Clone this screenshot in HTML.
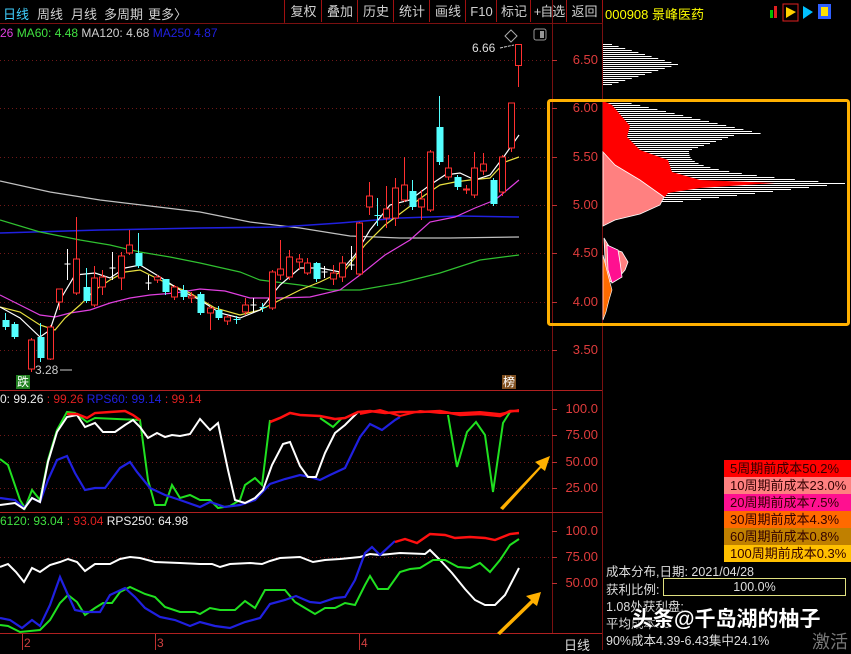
<!DOCTYPE html>
<html><head><meta charset="utf-8">
<style>
html,body{margin:0;padding:0;background:#000;width:851px;height:650px;overflow:hidden;font-family:"Liberation Sans","Noto Sans CJK SC",sans-serif;}
.abs{position:absolute;white-space:nowrap;}
.tb{position:absolute;top:0;height:22px;line-height:24px;font-size:13px;color:#d0d0d0;text-align:center;border-left:1px solid #a01010;white-space:nowrap;overflow:hidden;}
.lg{position:absolute;left:724px;width:127px;height:17px;line-height:17px;font-size:13px;color:#300;padding-left:6px;box-sizing:border-box;}
.ax{position:absolute;left:560px;width:38px;text-align:right;font-size:13px;color:#e03c3c;}
.tl{position:absolute;top:4px;font-size:13px;color:#d0d0d0;white-space:nowrap;}
</style></head><body>
<svg id="s" width="851" height="650" style="position:absolute;left:0;top:0" xmlns="http://www.w3.org/2000/svg">
<rect width="851" height="650" fill="#000"/>
<g stroke="#7a1010" stroke-width="1">
<line x1="0" y1="23.5" x2="602" y2="23.5"/>
<line x1="552.5" y1="0" x2="552.5" y2="634"/>
<line x1="602.5" y1="0" x2="602.5" y2="650"/>
<line x1="0" y1="390.5" x2="602" y2="390.5" stroke="#b02020"/>
<line x1="0" y1="512.5" x2="602" y2="512.5" stroke="#b02020"/>
<line x1="0" y1="633.5" x2="602" y2="633.5" stroke="#b02020"/>
<line x1="284.5" y1="0" x2="284.5" y2="23"/>
</g>
<g stroke="#701818" stroke-width="1" stroke-dasharray="1,3">
<line x1="0" y1="60.5" x2="552" y2="60.5"/><line x1="0" y1="108.5" x2="552" y2="108.5"/>
<line x1="0" y1="157.5" x2="552" y2="157.5"/><line x1="0" y1="205.5" x2="552" y2="205.5"/>
<line x1="0" y1="253.5" x2="552" y2="253.5"/><line x1="0" y1="302.5" x2="552" y2="302.5"/>
<line x1="0" y1="350.5" x2="552" y2="350.5"/>
<line x1="0" y1="435.5" x2="552" y2="435.5"/><line x1="0" y1="462.5" x2="552" y2="462.5"/>
<line x1="0" y1="488.5" x2="552" y2="488.5"/><line x1="0" y1="557.5" x2="552" y2="557.5"/>
</g>
<g stroke="#c03030" stroke-width="1">
<line x1="552" y1="60.5" x2="557" y2="60.5"/><line x1="552" y1="108.5" x2="557" y2="108.5"/><line x1="552" y1="157.5" x2="557" y2="157.5"/><line x1="552" y1="205.5" x2="557" y2="205.5"/><line x1="552" y1="253.5" x2="557" y2="253.5"/><line x1="552" y1="302.5" x2="557" y2="302.5"/><line x1="552" y1="350.5" x2="557" y2="350.5"/>
<line x1="552" y1="409.5" x2="557" y2="409.5"/><line x1="552" y1="435.5" x2="557" y2="435.5"/><line x1="552" y1="462.5" x2="557" y2="462.5"/><line x1="552" y1="488.5" x2="557" y2="488.5"/>
<line x1="552" y1="531.5" x2="557" y2="531.5"/><line x1="552" y1="557.5" x2="557" y2="557.5"/><line x1="552" y1="583.5" x2="557" y2="583.5"/>
<line x1="22.5" y1="634" x2="22.5" y2="650"/><line x1="155.5" y1="634" x2="155.5" y2="650"/><line x1="359.5" y1="634" x2="359.5" y2="650"/>
</g>
<g id="ma" fill="none" stroke-width="1.2"></g>
<g id="cd"></g>
<g id="rps" fill="none" stroke-width="2.2"></g>
<g id="chip"></g>
<rect x="548.5" y="100.5" width="300" height="224" fill="none" stroke="#ffb000" stroke-width="3" rx="2"/>
<g fill="#ffb000">
<polygon points="500,508 540,466 535,462 550,456 545,471 541,468 503,510"/>
<polygon points="497,633 531,600 526,596 541,592 537,606 533,603 500,635"/>
</g>
<path d="M505 36 l6 -6 l6 6 l-6 6z" fill="none" stroke="#aaa"/>
<rect x="534" y="29" width="12" height="11" rx="2" fill="none" stroke="#999"/><rect x="540" y="31" width="4" height="7" fill="#999"/>
<line x1="500" y1="48" x2="514" y2="45" stroke="#ccc" stroke-dasharray="3,1"/>
<line x1="60" y1="370" x2="72" y2="370" stroke="#ccc"/>
<rect x="770" y="10" width="3" height="8" fill="#00c000"/><rect x="774" y="6" width="3" height="12" fill="#e02020"/>
<rect x="783" y="4" width="15" height="17" fill="none" stroke="#e02020"/><polygon points="786,7 796,12 786,18" fill="#ffd000"/>
<polygon points="803,6 813,12 803,19" fill="#00c0ff"/>
<rect x="818" y="4" width="13" height="15" fill="#3060ff"/><rect x="821" y="7" width="7" height="9" fill="#ffe000"/>
</svg>

<div class="tl" style="left:3px;color:#40d0ff">日线</div>
<div class="tl" style="left:37px">周线</div>
<div class="tl" style="left:71px">月线</div>
<div class="tl" style="left:104px">多周期</div>
<div class="tl" style="left:148px">更多〉</div>
<div class="tb" style="left:284px;width:37px">复权</div>
<div class="tb" style="left:321px;width:36px">叠加</div>
<div class="tb" style="left:357px;width:36px">历史</div>
<div class="tb" style="left:393px;width:36px">统计</div>
<div class="tb" style="left:429px;width:36px">画线</div>
<div class="tb" style="left:465px;width:31px">F10</div>
<div class="tb" style="left:496px;width:34px">标记</div>
<div class="tb" style="left:530px;width:36px;letter-spacing:-1px">+自选</div>
<div class="tb" style="left:566px;width:35px;border-right:1px solid #a01010">返回</div>
<div class="abs" style="left:605px;top:4px;font-size:13px;color:#ffff00">000908 景峰医药</div>

<div class="abs" style="left:0;top:26px;font-size:12px"><span style="color:#e040e0">26 </span><span style="color:#40e040">MA60: 4.48 </span><span style="color:#d0d0d0">MA120: 4.68 </span><span style="color:#2020e0">MA250 4.87</span></div>
<div class="abs" style="left:472px;top:41px;font-size:12px;color:#ddd">6.66</div>
<div class="abs" style="left:35px;top:363px;font-size:12px;color:#ccc">3.28</div>
<div class="abs" style="left:16px;top:375px;font-size:12px;color:#fff;background:#208020;padding:0 1px;line-height:14px">跌</div>
<div class="abs" style="left:502px;top:375px;font-size:12px;color:#fff;background:#805020;padding:0 1px;line-height:14px">榜</div>

<div class="ax" style="top:52px">6.50</div><div class="ax" style="top:100px">6.00</div><div class="ax" style="top:149px">5.50</div><div class="ax" style="top:197px">5.00</div><div class="ax" style="top:245px">4.50</div><div class="ax" style="top:294px">4.00</div><div class="ax" style="top:342px">3.50</div>
<div class="ax" style="top:401px">100.0</div><div class="ax" style="top:427px">75.00</div><div class="ax" style="top:454px">50.00</div><div class="ax" style="top:480px">25.00</div>
<div class="ax" style="top:523px">100.0</div><div class="ax" style="top:549px">75.00</div><div class="ax" style="top:575px">50.00</div>

<div class="abs" style="left:0;top:392px;font-size:12px"><span style="color:#eee">0: 99.26 </span><span style="color:#e02020">: 99.26 </span><span style="color:#2020e0">RPS60: 99.14 </span><span style="color:#e02020">: 99.14</span></div>
<div class="abs" style="left:0;top:514px;font-size:12px"><span style="color:#40e040">6120: 93.04 </span><span style="color:#e02020">: 93.04 </span><span style="color:#eee">RPS250: 64.98</span></div>
<div class="abs" style="left:24px;top:636px;font-size:12px;color:#d04040">2</div>
<div class="abs" style="left:157px;top:636px;font-size:12px;color:#d04040">3</div>
<div class="abs" style="left:361px;top:636px;font-size:12px;color:#d04040">4</div>
<div class="abs" style="left:564px;top:635px;font-size:13px;color:#ddd">日线</div>

<div class="lg" style="top:460px;background:#ff0000">5周期前成本50.2%</div>
<div class="lg" style="top:477px;background:#ff8080">10周期前成本23.0%</div>
<div class="lg" style="top:494px;background:#ff1090">20周期前成本7.5%</div>
<div class="lg" style="top:511px;background:#ff6a00">30周期前成本4.3%</div>
<div class="lg" style="top:528px;background:#c08000">60周期前成本0.8%</div>
<div class="lg" style="top:545px;background:#ffc000">100周期前成本0.3%</div>
<div class="abs" style="left:606px;top:561px;font-size:12.5px;color:#ddd">成本分布,日期: 2021/04/28</div>
<div class="abs" style="left:606px;top:579px;font-size:12.5px;color:#ddd">获利比例:</div>
<div class="abs" style="left:663px;top:578px;width:181px;height:16px;border:1px solid #e0e080;font-size:12.5px;color:#ddd;text-align:center;line-height:16px">100.0%</div>
<div class="abs" style="left:606px;top:596px;font-size:12.5px;color:#ddd">1.08处获利盘:</div>
<div class="abs" style="left:606px;top:613px;font-size:12.5px;color:#ddd">平均成本: 3</div>
<div class="abs" style="left:606px;top:630px;font-size:12.5px;color:#ddd">90%成本4.39-6.43集中24.1%</div>
<div class="abs" style="left:632px;top:603px;font-size:21px;font-weight:bold;color:#fff;text-shadow:1px 1px 2px #000,-1px -1px 2px #000">头条@千岛湖的柚子</div>
<div class="abs" style="left:812px;top:628px;font-size:18px;color:#777">激活</div>

<script>
var NS="http://www.w3.org/2000/svg";
function el(p,t,a){var e=document.createElementNS(NS,t);for(var k in a)e.setAttribute(k,a[k]);document.getElementById(p).appendChild(e);return e;}
function pl(p,col,pts,w){el(p,"polyline",{points:pts.map(function(q){return q.join(",")}).join(" "),stroke:col,"stroke-width":w||1.2,fill:"none"});}
var C=[[5,320,327,313,330,'c'],[14,324,337,322,339,'c'],[30,340,369,338,372,'r'],[39,337,358,323,362,'c'],[48,327,359,325,360,'r'],[57,289,302,289,310,'r'],[65,264,265,249,280,'w'],[74,259,293,217,295,'r'],[83,287,301,268,303,'c'],[91,278,305,266,307,'r'],[99,277,287,270,295,'r'],[108,268,269,252,280,'w'],[117,256,278,252,290,'r'],[125,245,253,230,255,'r'],[134,253,266,233,268,'c'],[143,283,284,275,290,'w'],[152,277,280,275,283,'r'],[160,279,292,279,295,'c'],[168,287,297,285,300,'r'],[177,290,297,285,300,'c'],[185,296,298,292,303,'r'],[194,294,313,292,315,'c'],[203,308,313,306,330,'r'],[211,310,318,306,320,'c'],[220,317,321,315,325,'r'],[228,319,320,316,324,'c'],[237,305,312,298,315,'r'],[245,305,306,298,312,'w'],[254,307,308,303,312,'c'],[263,272,308,270,310,'r'],[271,269,275,240,280,'r'],[280,257,277,250,280,'r'],[289,259,262,254,270,'r'],[297,263,273,258,275,'r'],[306,263,279,262,282,'c'],[314,272,273,266,278,'w'],[322,273,279,265,285,'r'],[331,263,277,256,282,'r'],[340,265,266,246,270,'w'],[348,223,274,222,276,'r'],[357,196,207,182,215,'r'],[365,215,216,198,226,'c'],[374,209,218,186,228,'r'],[382,188,218,178,226,'r'],[391,185,200,157,202,'r'],[399,191,207,180,210,'c'],[408,199,207,190,220,'r'],[416,152,210,150,212,'r'],[425,127,162,96,165,'c'],[434,168,177,155,180,'r'],[442,177,187,175,190,'c'],[451,189,190,185,194,'r'],[459,168,195,152,198,'r'],[468,164,171,153,175,'r'],[477,180,204,178,206,'c'],[486,157,192,155,196,'r'],[495,103,148,103,152,'r']];
C.forEach(function(c){var x=Math.round(c[0]*1.033)+0.5,tp=c[5];
 var col=tp=='r'?'#ff3030':(tp=='c'?'#54ffff':'#ffffff');
 el('cd','line',{x1:x,y1:c[3],x2:x,y2:c[4],stroke:col});
 if(tp=='w'){el('cd','line',{x1:x-3,y1:c[1],x2:x+3,y2:c[1],stroke:col});}
 else if(tp=='c'){el('cd','rect',{x:x-3,y:c[1],width:7,height:Math.max(1,c[2]-c[1]),fill:col});}
 else {el('cd','rect',{x:x-3,y:c[1],width:6,height:Math.max(1,c[2]-c[1]),fill:'#000',stroke:col});}
});
el('cd','line',{x1:518.5,y1:66,x2:518.5,y2:87,stroke:'#ff3030'});
el('cd','rect',{x:515.5,y:44.5,width:6,height:21,fill:'#000',stroke:'#ff3030'});
pl('ma','#c0c0c0',[[0,181],[50,192],[100,200],[150,206],[200,212],[250,222],[300,228],[350,236],[400,238],[450,238],[519,237]]);
pl('ma','#2020e0',[[0,233],[100,230],[200,228],[280,227],[340,223],[400,218],[460,216],[519,217]],1.5);
pl('ma','#30c030',[[0,220],[40,232],[80,240],[110,245],[140,252],[170,257],[200,263],[240,272],[260,280],[300,285],[330,290],[360,290],[400,283],[440,273],[480,260],[519,255]]);
pl('ma','#e040e0',[[0,295],[20,305],[40,315],[55,317],[70,313],[90,310],[110,303],[130,298],[150,295],[175,293],[200,289],[225,291],[250,298],[280,298],[310,297],[340,290],[360,275],[385,255],[410,240],[430,222],[455,217],[475,208],[495,200],[519,180]]);
pl('ma','#e8e040',[[0,307],[20,312],[40,325],[55,330],[65,318],[80,305],[95,290],[110,280],[125,272],[140,270],[160,280],[190,293],[215,308],[240,315],[260,310],[280,300],[300,290],[320,282],[345,270],[365,245],[385,225],[405,210],[425,195],[440,185],[455,182],[470,180],[490,178],[505,162],[519,157]]);
pl('ma','#ffffff',[[0,307],[20,318],[40,337],[50,330],[60,300],[75,275],[95,273],[110,278],[125,268],[140,265],[160,277],[180,290],[200,300],[220,313],[240,318],[260,310],[280,285],[300,268],[320,268],[340,272],[355,255],[370,230],[390,205],[410,200],[430,185],[445,175],[460,173],[475,180],[490,175],[505,155],[519,135]]);
pl('rps','#20e020',[[0,459],[8,465],[20,500],[25,508],[32,490],[40,500],[48,460],[57,430],[67,412],[75,413],[87,422],[95,418],[140,420],[148,480],[155,505],[165,505],[172,485],[180,498],[190,495],[200,500],[210,500],[218,508],[230,506],[240,500],[245,485],[255,478],[262,485],[270,420]],2);
pl('rps','#20e020',[[320,418],[333,427],[342,418]],2);
pl('rps','#20e020',[[448,415],[457,467],[467,432],[476,422],[485,435],[493,492],[503,423],[510,412]],2);
pl('rps','#2020e0',[[0,498],[15,500],[24,508],[32,498],[40,502],[48,480],[57,460],[67,456],[75,473],[85,490],[95,488],[105,488],[120,468],[130,462],[137,472],[150,488],[165,495],[180,500],[200,507],[210,502],[225,507],[240,505],[255,500],[270,484],[285,479],[300,475],[310,477],[320,480],[330,475],[345,468],[360,437],[370,424],[382,430],[395,420],[400,417]],2.2);
pl('rps','#ffffff',[[0,505],[15,503],[24,509],[32,498],[40,502],[48,462],[57,432],[67,417],[77,415],[85,427],[95,423],[103,432],[115,432],[125,425],[133,420],[140,427],[148,438],[157,433],[165,437],[172,435],[180,436],[190,434],[200,419],[210,430],[218,423],[228,470],[235,500],[245,503],[255,498],[263,490],[272,465],[283,444],[290,442],[300,466],[308,477],[316,477],[325,453],[335,433],[345,425],[358,412]],2);
pl('rps','#ff1010',[[67,414],[77,414],[87,418],[95,413],[110,412],[125,411],[133,415],[140,420]],2.4);
pl('rps','#ff1010',[[270,422],[280,418],[290,413],[300,415],[320,416],[335,419],[345,418],[358,412],[370,411],[385,413],[400,412],[420,412],[440,411],[460,415],[480,414],[500,416],[510,411],[519,411]],2.6);
pl('rps','#ff1010',[[360,414],[380,410],[400,416],[420,411],[440,413],[460,413],[480,412],[500,414],[519,410]],2);
pl('rps','#ffffff',[[0,567],[8,564],[16,572],[24,582],[32,568],[40,572],[50,565],[60,562],[68,559],[77,562],[85,571],[95,564],[110,564],[120,559],[130,557],[140,558],[155,562],[180,563],[200,564],[212,564],[220,567],[230,564],[250,563],[262,564],[270,561],[280,558],[300,557],[313,562],[325,560],[340,559],[360,557],[370,554],[380,555],[400,553],[425,554],[430,550],[440,560],[452,573],[465,589],[475,600],[485,605],[495,605],[505,595],[519,568]],2);
pl('rps','#20e020',[[0,625],[8,626],[20,632],[30,631],[40,630],[50,620],[60,603],[68,595],[77,602],[85,615],[95,608],[103,603],[112,603],[120,592],[130,587],[145,594],[155,597],[165,607],[180,612],[195,612],[200,614],[210,608],[220,610],[235,610],[245,601],[255,608],[265,590],[285,590],[295,602],[305,608],[315,614],[325,608],[335,608],[345,603],[355,605],[365,585],[370,576],[378,589],[388,589],[400,572],[410,569],[420,568],[433,560],[445,560],[458,567],[470,568],[480,563],[490,572],[500,560],[510,545],[519,539]],2);
pl('rps','#2020e0',[[0,618],[10,620],[22,628],[32,620],[40,626],[50,605],[60,577],[68,595],[75,610],[85,612],[100,612],[110,595],[125,588],[135,597],[145,608],[160,617],[175,620],[190,626],[200,622],[215,626],[230,628],[245,622],[260,618],[270,604],[285,600],[296,596],[310,602],[320,603],[335,598],[345,597],[355,580],[365,553],[372,547],[380,555],[395,541]],2.2);
pl('rps','#ff1010',[[395,542],[405,539],[417,543],[430,534],[445,535],[455,538],[470,537],[485,538],[495,540],[510,534],[519,533]],2.4);
function hl(y,len,col){el('chip','line',{x1:603,y1:y+0.5,x2:603+len,y2:y+0.5,stroke:col||'#fff'});}
for(var y=44;y<=85;y+=2){var d=Math.abs(y-64);hl(y,Math.max(4,75-d*3.3));}
for(var y=101;y<=201;y+=2){var L;
 if(y<=133)L=20+(y-101)*4.3; else if(y<=150)L=137-(y-133)*3; else if(y<=183)L=86+Math.pow((y-150)/33,3)*156; else L=242-(y-183)*9;
 hl(y,Math.max(2,L));}
el('chip','polygon',{points:"603,101 612,105 630,126 627,137 640,150 668,160 672,172 700,180 775,183 700,188 668,193 664,198 640,180 615,165 603,152",fill:'#ff0000'});
el('chip','polygon',{points:"603,152 615,165 640,180 664,197 660,205 640,214 615,220 603,226",fill:'#ff8080',stroke:'#fff','stroke-width':0.8});
el('chip','polygon',{points:"604,238 610,248 622,252 628,262 625,270 620,276 612,282 606,280",fill:'#ff8080',stroke:'#fff','stroke-width':0.8});
el('chip','polygon',{points:"607,245 618,250 620,262 622,277 612,283 608,270",fill:'#ff1090',stroke:'#fff','stroke-width':0.8});
el('chip','polygon',{points:"603,255 608,275 612,290 609,300 606,312 603,320",fill:'#ff6a00',stroke:'#fff','stroke-width':0.6});
</script>
</body></html>
